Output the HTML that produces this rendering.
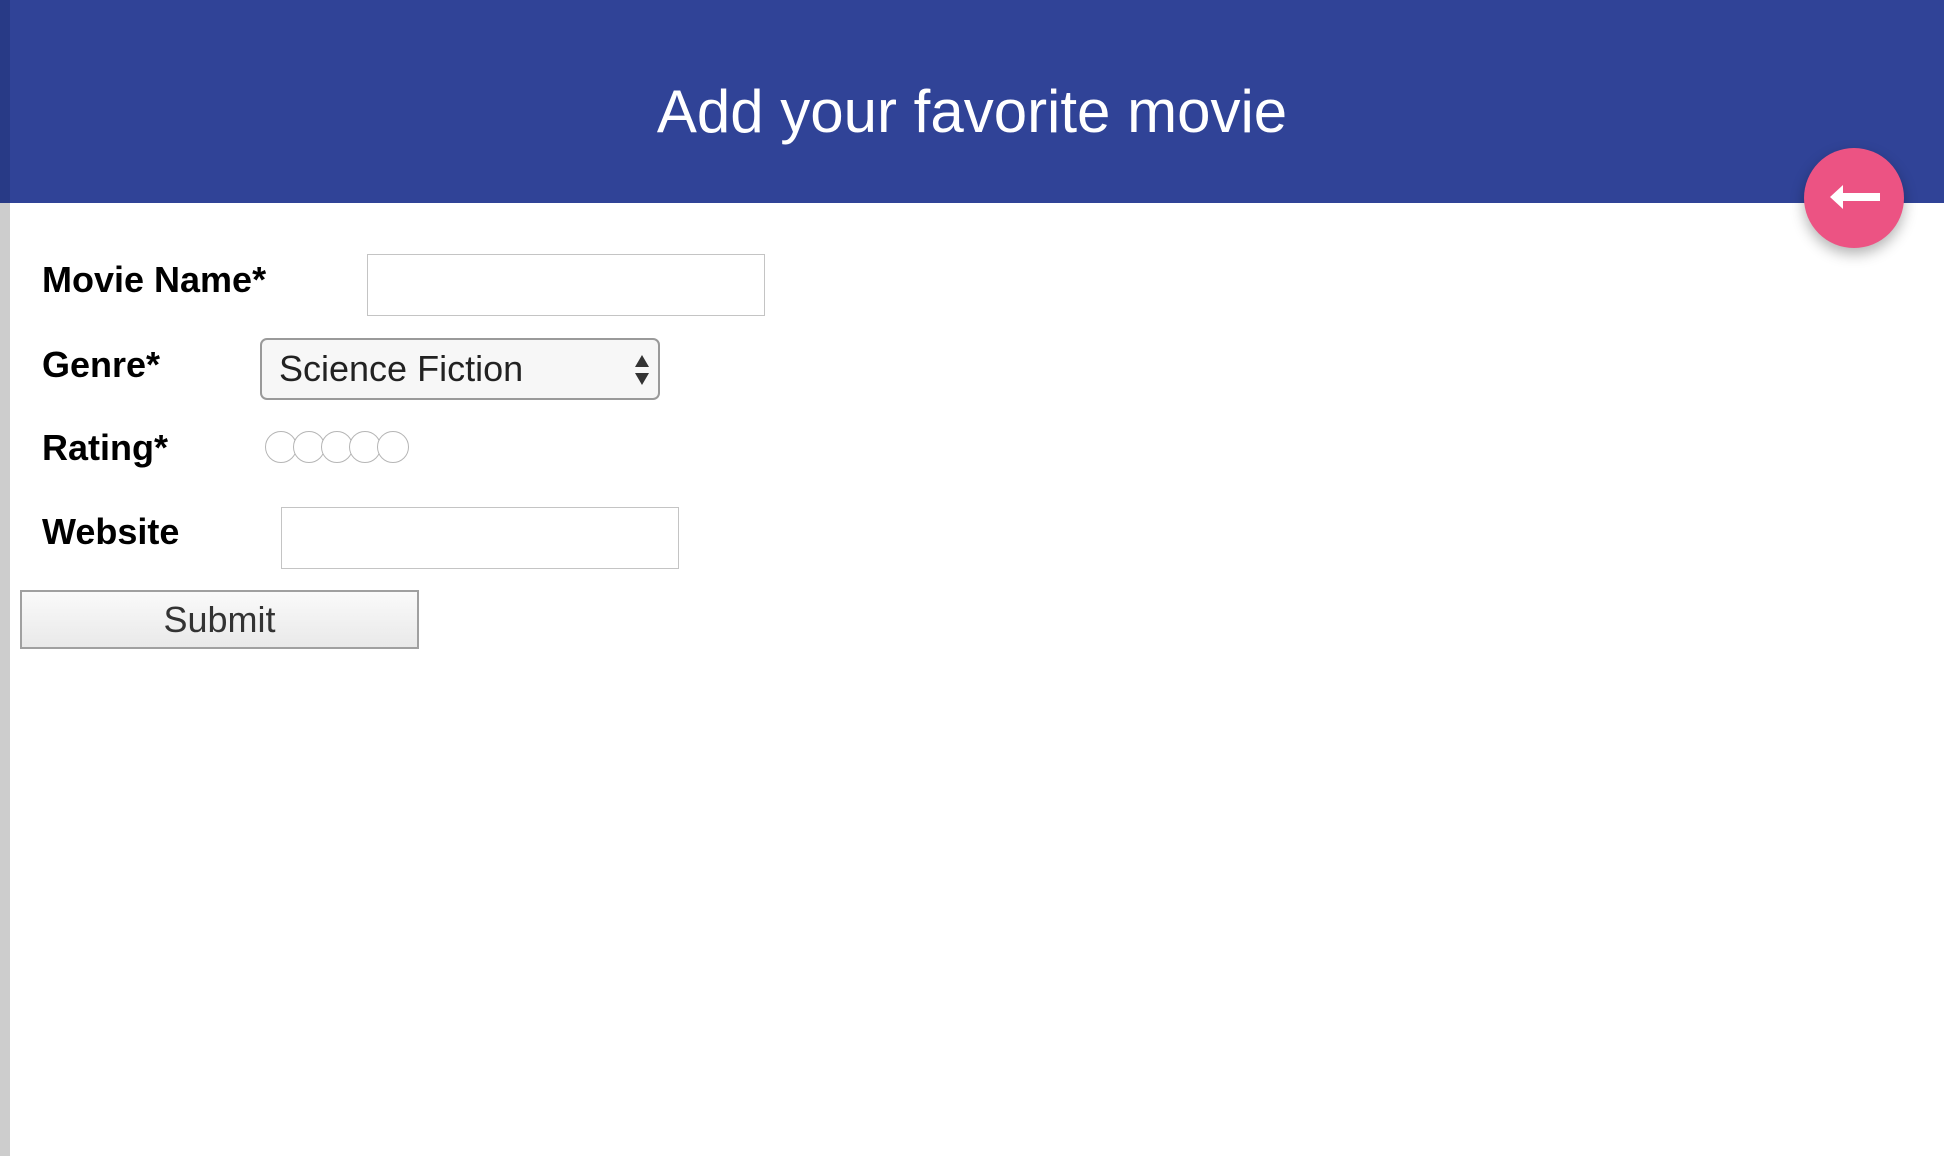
<!DOCTYPE html>
<html><head><style>
body{margin:0;width:1944px;height:1156px;position:relative;overflow:hidden;background:#fff;font-family:"Liberation Sans",Arial,sans-serif}
.hdr{position:absolute;left:0;top:0;width:1944px;height:203px;background:#304397}
.hdr .edge{position:absolute;left:0;top:0;width:10px;height:203px;background:#283a86}
.strip{position:absolute;left:0;top:203px;width:10px;height:953px;background:#cdcdcd}
h1{position:absolute;left:0;width:1944px;top:74px;margin:0;text-align:center;color:#fff;font-weight:normal;font-size:60px;line-height:76px;text-indent:0px}
.lbl{position:absolute;left:42px;font-weight:bold;font-size:36px;color:#000;line-height:1}
.inp{position:absolute;border:1.5px solid #c4c4c4;box-sizing:border-box;background:#fff}
.sel{position:absolute;left:260px;top:338px;width:400px;height:62px;box-sizing:border-box;border:2px solid #9a9a9a;border-radius:7px;background:#f7f7f7;font-size:36px;color:#222;padding-left:17px;line-height:58px}
.r{position:absolute;top:431px;width:32px;height:32px;border:1.5px solid #b5b5b5;border-radius:50%;background:#fff;box-sizing:border-box}
.btn{position:absolute;left:20px;top:590px;width:399px;height:59px;box-sizing:border-box;border:2px solid #a0a0a0;background:linear-gradient(#fafafa,#e9e9e9);text-align:center;font-size:36px;line-height:55px;color:#333}
.fab{position:absolute;left:1804px;top:148px;width:100px;height:100px;border-radius:50%;background:#ec5383;box-shadow:0 6px 14px rgba(0,0,0,.3)}
</style></head><body>
<div class="hdr"><div class="edge"></div></div>
<div class="strip"></div>
<h1>Add your favorite movie</h1>
<div class="lbl" style="top:262px">Movie Name*</div>
<div class="inp" style="left:367px;top:254px;width:398px;height:62px"></div>
<div class="lbl" style="top:347px">Genre*</div>
<div class="sel">Science Fiction
<svg style="position:absolute;left:370px;top:12px" width="20" height="36" viewBox="0 0 20 36"><path d="M3 15L10 3L17 15Z M3 21L17 21L10 33Z" fill="#333"/></svg></div>
<div class="lbl" style="top:430px">Rating*</div>
<div class="r" style="left:265px"></div>
<div class="r" style="left:293px"></div>
<div class="r" style="left:321px"></div>
<div class="r" style="left:349px"></div>
<div class="r" style="left:377px"></div>
<div class="lbl" style="top:514px">Website</div>
<div class="inp" style="left:281px;top:507px;width:398px;height:62px"></div>
<div class="btn">Submit</div>
<div class="fab"><svg style="position:absolute;left:24px;top:32px" width="54" height="36" viewBox="0 0 54 36"><path d="M2 17L15 5L15 13L52 13L52 21L15 21L15 29Z" fill="#fff"/></svg></div>
</body></html>
